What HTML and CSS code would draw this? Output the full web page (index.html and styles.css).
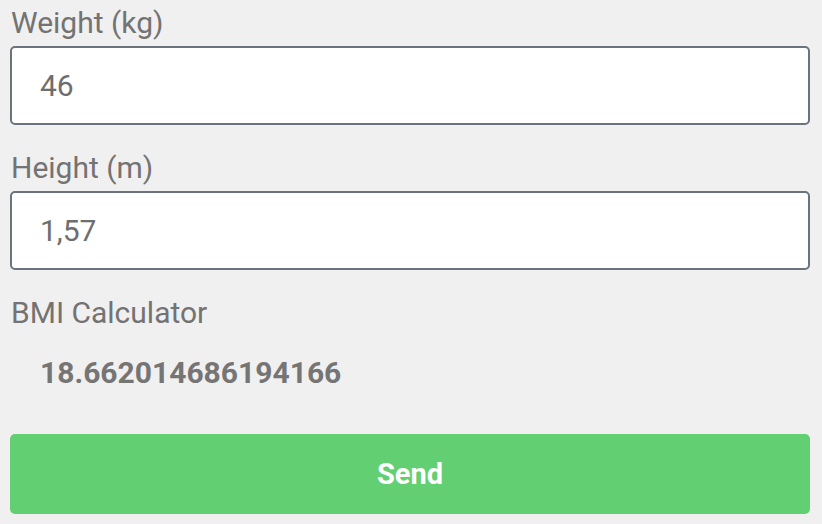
FILE: index.html
```html
<!DOCTYPE html>
<html lang="en">
<head>
<meta charset="utf-8">
<title>BMI Calculator</title>
<link rel="stylesheet" href="styles.css">
</head>
<body>
<form class="bmi-form">
  <div class="field">
    <label class="field-label" for="weight">Weight (kg)</label>
    <input class="field-input" id="weight" type="text" value="46">
  </div>
  <div class="field">
    <label class="field-label" for="height">Height (m)</label>
    <input class="field-input" id="height" type="text" value="1,57">
  </div>
  <div class="field">
    <div class="field-label">BMI Calculator</div>
    <div class="result">18.662014686194166</div>
  </div>
  <button class="send-btn" type="button">Send</button>
</form>
</body>
</html>
```

FILE: styles.css
```css
* {
  box-sizing: border-box;
}

html, body {
  margin: 0;
  padding: 0;
  background: #f0f0f0;
}

body {
  font-family: Roboto, "Liberation Sans", Arial, sans-serif;
  color: #737373;
}

.bmi-form {
  display: flex;
  flex-direction: column;
  padding: 0 12px 0 10px;
}

.field {
  display: flex;
  flex-direction: column;
  margin-bottom: 20px;
}

.field:last-of-type {
  margin-bottom: 0;
}

.field-label {
  display: block;
  font-size: 30px;
  line-height: 46px;
  padding-left: 1px;
  color: #737373;
}

.field-input {
  display: block;
  width: 100%;
  height: 79px;
  margin: 0;
  padding: 0 28px;
  border: 2px solid #6b737d;
  border-radius: 5px;
  background: #ffffff;
  font-family: Roboto, "Liberation Sans", Arial, sans-serif;
  font-size: 30px;
  color: #6e6e6e;
  outline: none;
}

.result {
  font-size: 30px;
  font-weight: 700;
  line-height: 74px;
  padding-left: 30px;
  color: #757575;
}

.send-btn {
  display: block;
  width: 100%;
  height: 80px;
  margin-top: 24px;
  border: none;
  border-radius: 5px;
  background: #62cf72;
  color: #ffffff;
  font-family: Roboto, "Liberation Sans", Arial, sans-serif;
  font-size: 29px;
  font-weight: 700;
  cursor: pointer;
}
```
